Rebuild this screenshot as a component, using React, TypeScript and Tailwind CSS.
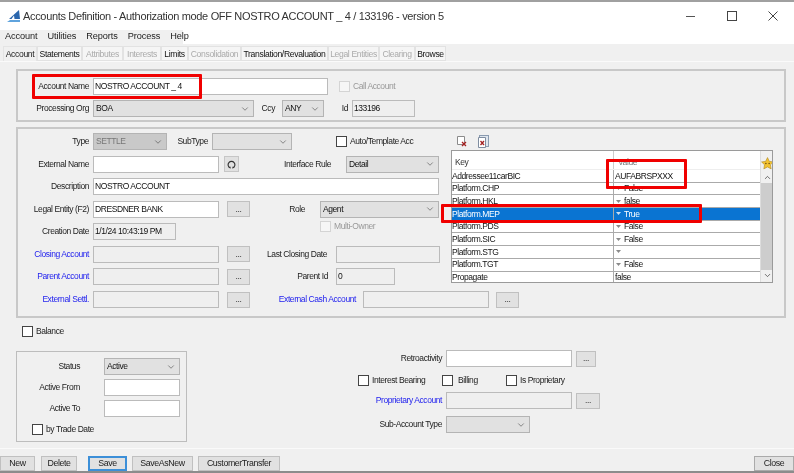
import type { ReactNode } from 'react';
import { ChevronDown, ChevronUp } from 'lucide-react';

const FONT = 'font-["Liberation_Sans",Arial,sans-serif]';

function Label({ width, blue, children }: { width: string; blue?: boolean; children: ReactNode }) {
  return (
    <span className={`${width} shrink-0 text-right whitespace-nowrap ${blue ? 'text-[#2222ee]' : 'text-[#222]'}`}>
      {children}
    </span>
  );
}

function Input({ width, value, off }: { width: string; value?: string; off?: boolean }) {
  return (
    <div
      className={`${width} h-[17px] shrink-0 flex items-center px-[1px] border border-[#bbb] truncate text-[#111] ${off ? 'bg-[#efefef]' : 'bg-white'}`}
    >
      {value}
    </div>
  );
}

function Select({ width, value, off }: { width: string; value?: string; off?: boolean }) {
  return (
    <div
      className={`${width} h-[17px] shrink-0 flex items-center justify-between pl-[2px] pr-[3px] border border-[#b4b4b4] ${off ? 'bg-[#c9c9c9] text-[#777]' : 'bg-[#e1e1e1] text-[#111]'}`}
    >
      <span>{value}</span>
      <ChevronDown size={10} strokeWidth={1.4} className="text-[#444]" />
    </div>
  );
}

function Dots({ width = 'w-[23px]' }: { width?: string }) {
  return (
    <div className={`${width} h-[16px] shrink-0 flex items-center justify-center bg-[#e1e1e1] border border-[#c0c0c0] text-[#333] leading-none`}>
      ...
    </div>
  );
}

function Check({ label, off, gap = 'gap-[3px]' }: { label: string; off?: boolean; gap?: string }) {
  return (
    <div className={`flex items-center ${gap} whitespace-nowrap`}>
      <div className={`w-[11px] h-[11px] shrink-0 border ${off ? 'border-[#d4d4d4] bg-[#f6f6f6]' : 'border-[#444] bg-white'}`} />
      <span className={off ? 'text-[#999]' : 'text-[#222]'}>{label}</span>
    </div>
  );
}

function RedBox({ cls }: { cls: string }) {
  return <div className={`absolute border-[3px] border-[#f00000] rounded-[1px] pointer-events-none ${cls}`} />;
}

function DocX({ stacked }: { stacked?: boolean }) {
  return (
    <svg width="13" height="13" viewBox="0 0 13 13" fill="none">
      {stacked && <rect x="2.5" y="0.5" width="9" height="11" fill="#dfe6ee" stroke="#8a9bb0" />}
      <path d={stacked ? 'M1.5 2.5h7v10h-7z' : 'M1.5 1.5h7v8h-7z'} fill="#fff" stroke={stacked ? '#7f8da0' : '#8b8b8b'} />
      <path d={stacked ? 'M3.5 6l3.5 4M7 6l-3.5 4' : 'M6 7l4 4M10 7l-4 4'} stroke="#a32020" strokeWidth="1.3" />
    </svg>
  );
}

const TABS: { name: string; width: string; off?: boolean }[] = [
  { name: 'Statements', width: 'w-[45px]' },
  { name: 'Attributes', width: 'w-[41px]', off: true },
  { name: 'Interests', width: 'w-[38px]', off: true },
  { name: 'Limits', width: 'w-[27px]' },
  { name: 'Consolidation', width: 'w-[53px]', off: true },
  { name: 'Translation/Revaluation', width: 'w-[87px]' },
  { name: 'Legal Entities', width: 'w-[51px]', off: true },
  { name: 'Clearing', width: 'w-[36px]', off: true },
  { name: 'Browse', width: 'w-[31px]' },
];

const ROWS: { key: string; value: string; combo?: boolean; selected?: boolean }[] = [
  { key: 'Addressee11carBIC', value: 'AUFABRSPXXX' },
  { key: 'Platform.CHP', value: 'False', combo: true },
  { key: 'Platform.HKL', value: 'false', combo: true },
  { key: 'Platform.MEP', value: 'True', combo: true, selected: true },
  { key: 'Platform.PDS', value: 'False', combo: true },
  { key: 'Platform.SIC', value: 'False', combo: true },
  { key: 'Platform.STG', value: '', combo: true },
  { key: 'Platform.TGT', value: 'False', combo: true },
  { key: 'Propagate', value: 'false' },
];

function PropertyTable() {
  return (
    <div className="w-[322px] h-[133px] flex border border-[#9a9a9a] bg-white text-[#111] overflow-hidden">
      <div className="w-[308px] shrink-0 flex flex-col">
        <div className="h-[19px] shrink-0 flex items-end text-[#333] border-b border-[#eee]">
          <span className="w-[162px] pl-[3px] pb-[3px] border-r border-[#ccc] h-full flex items-end">Key</span>
          <span className="pl-[4px] pb-[3px] text-[#777]">Value</span>
        </div>
        {ROWS.map((row) => (
          <div
            key={row.key}
            className={`h-[12.7px] shrink-0 flex items-center border-b border-[#aaa] ${row.selected ? 'bg-[#0a74d2] text-white' : ''}`}
          >
            <span className="w-[162px] shrink-0 border-r border-[#aaa] h-full flex items-center">{row.key}</span>
            <span className="flex items-center gap-[3px] pl-[1px]">
              {row.combo && (
                <svg width="5" height="3" viewBox="0 0 5 3" className="ml-[1px]">
                  <path d="M0 0h5L2.5 3z" fill={row.selected ? '#cfe2f5' : '#8a8a8a'} />
                </svg>
              )}
              {row.value}
            </span>
          </div>
        ))}
      </div>
      <div className="flex-1 flex flex-col items-center bg-[#f0f0f0] border-l border-[#ddd]">
        <svg width="13" height="13" viewBox="0 0 24 24" className="mt-[6px] mb-[3px] shrink-0">
          <path d="M12 1l3.4 7 7.6 1-5.5 5.4 1.3 7.6-6.8-3.6L5.2 22l1.3-7.6L1 9l7.6-1z" fill="#f2c230" stroke="#a98420" />
          <circle cx="9" cy="12" r="1.4" fill="#6b4a10" />
          <circle cx="15" cy="12" r="1.4" fill="#6b4a10" />
        </svg>
        <ChevronUp size={9} strokeWidth={1.8} className="text-[#333] shrink-0" />
        <div className="w-full flex-1 bg-[#cdcdcd] my-[1px]" />
        <ChevronDown size={9} strokeWidth={1.8} className="text-[#333] shrink-0 mb-[2px]" />
      </div>
    </div>
  );
}

export default function App() {
  return (
    <div className={`${FONT} relative w-[794px] h-[473px] overflow-hidden flex flex-col bg-white text-[8.5px] tracking-[-0.42px] leading-none blur-[0.2px]`}>
      {/* title bar */}
      <div className="h-[30px] shrink-0 border-t-2 border-[#a0a0a0] flex items-center pl-[6px] text-[#333]">
        <svg width="14" height="14" viewBox="0 0 14 14" className="shrink-0">
          <path d="M3 10L13 1l1 9H8.5L8 6.5 5.5 10z" fill="#2a66ad" />
          <path d="M1 13l3-2h10v2z" fill="#5fa3dd" />
        </svg>
        <span className="ml-[3px] text-[11px] tracking-[-0.33px] whitespace-nowrap">
          Accounts Definition - Authorization mode OFF NOSTRO ACCOUNT _ 4 / 133196 - version 5
        </span>
        <div className="ml-auto flex items-center">
          <svg width="10" height="10" viewBox="0 0 10 10" className="mr-[31px]"><path d="M0 5.5h9" stroke="#555" /></svg>
          <svg width="10" height="10" viewBox="0 0 10 10" className="mr-[31px]"><rect x="0.5" y="0.5" width="9" height="9" fill="none" stroke="#444" /></svg>
          <svg width="10" height="10" viewBox="0 0 10 10" className="mr-[16px]"><path d="M0.5 0.5l9 9M9.5 0.5l-9 9" stroke="#444" /></svg>
        </div>
      </div>

      {/* menu */}
      <div className="h-[14px] shrink-0 flex">
        <div className="w-[183px] flex items-center gap-[10px] pl-[5px] bg-[#f0f0f0] text-[9.2px] tracking-[-0.1px] text-[#222]">
          <span>Account</span>
          <span>Utilities</span>
          <span>Reports</span>
          <span>Process</span>
          <span>Help</span>
        </div>
      </div>

      {/* window body */}
      <div className="flex-1 flex flex-col min-h-0 bg-[#f0f0f0] pt-[2px]">
        <div className="h-[15px] shrink-0 flex items-stretch pl-[3px] text-[8.6px] tracking-[-0.35px]">
          <div className="w-[34px] -mb-[1px] bg-[#f0f0f0] border-x border-t border-[#e4e4e4] flex items-center justify-center text-[#222]">Account</div>
          {TABS.map((t) => (
            <div
              key={t.name}
              className={`${t.width} pt-[1px] flex items-center justify-center whitespace-nowrap border border-[#e2e2e2] bg-[#f5f5f5] ${t.off ? 'text-[#aaa]' : 'text-[#111]'}`}
            >
              {t.name}
            </div>
          ))}
        </div>

        <div className="flex-1 min-h-0 flex flex-col border-t border-b border-[#fafafa] px-[16px]">
          {/* account panel */}
          <div className="mt-[7px] h-[53px] w-[770px] shrink-0 border-2 border-[#c8c8c8] flex flex-col pt-[7px] gap-[5px]">
            <div className="flex items-center gap-[4px]">
              <Label width="w-[71px]">Account Name</Label>
              <Input width="w-[235px]" value="NOSTRO ACCOUNT _ 4" />
              <div className="ml-[7px]"><Check label="Call Account" off /></div>
            </div>
            <div className="flex items-center gap-[4px]">
              <Label width="w-[71px]">Processing Org</Label>
              <Select width="w-[161px]" value="BOA" />
              <Label width="w-[17px]">Ccy</Label>
              <div className="ml-[3px]"><Select width="w-[42px]" value="ANY" /></div>
              <Label width="w-[20px]">Id</Label>
              <Input width="w-[63px]" value="133196" off />
            </div>
          </div>

          {/* main panel */}
          <div className="mt-[5px] h-[191px] w-[770px] shrink-0 border-2 border-[#c8c8c8] flex flex-col">
            <div className="flex">
              <div className="w-[433px] shrink-0 flex flex-col pt-[4px] gap-[5.5px]">
                <div className="flex items-center gap-[4px]">
                  <Label width="w-[71px]">Type</Label>
                  <Select width="w-[74px]" value="SETTLE" off />
                  <Label width="w-[37px]">SubType</Label>
                  <Select width="w-[80px]" />
                  <div className="ml-[40px]"><Check label="Auto/Template Acc" /></div>
                </div>
                <div className="flex items-center gap-[4px]">
                  <Label width="w-[71px]">External Name</Label>
                  <Input width="w-[126px]" />
                  <div className="ml-[1px] w-[15px] h-[16px] shrink-0 flex items-center justify-center bg-[#e1e1e1] border border-[#c6c6c6]">
                    <svg width="9" height="9" viewBox="0 0 10 10" fill="none">
                      <path d="M3 8.5A3.8 3.8 0 1 1 7 8.5" stroke="#333" strokeWidth="1.3" />
                      <path d="M1 7.5h3v2.2zM9 7.5H6v2.2z" fill="#333" />
                    </svg>
                  </div>
                  <Label width="w-[88px]">Interface Rule</Label>
                  <div className="ml-[11px]"><Select width="w-[93px]" value="Detail" /></div>
                </div>
                <div className="flex items-center gap-[4px]">
                  <Label width="w-[71px]">Description</Label>
                  <Input width="w-[346px]" value="NOSTRO ACCOUNT" />
                </div>
                <div className="flex items-center gap-[4px]">
                  <Label width="w-[71px]">Legal Entity (F2)</Label>
                  <Input width="w-[126px]" value="DRESDNER BANK" />
                  <div className="ml-[4px]"><Dots /></div>
                  <Label width="w-[51px]">Role</Label>
                  <div className="ml-[11px]"><Select width="w-[119px]" value="Agent" /></div>
                </div>
                <div className="flex items-start gap-[4px] h-[17px]">
                  <div className="self-center flex items-center gap-[4px]">
                    <Label width="w-[71px]">Creation Date</Label>
                    <Input width="w-[83px]" value="1/1/24 10:43:19 PM" off />
                  </div>
                  <div className="ml-[140px] -mt-[2px]"><Check label="Multi-Owner" off /></div>
                </div>
                <div className="flex items-center gap-[4px]">
                  <Label width="w-[71px]" blue>Closing Account</Label>
                  <Input width="w-[126px]" off />
                  <div className="ml-[4px]"><Dots /></div>
                  <Label width="w-[73px]">Last Closing Date</Label>
                  <div className="ml-[5px]"><Input width="w-[104px]" off /></div>
                </div>
                <div className="flex items-center gap-[4px]">
                  <Label width="w-[71px]" blue>Parent Account</Label>
                  <Input width="w-[126px]" off />
                  <div className="ml-[4px]"><Dots /></div>
                  <Label width="w-[74px]">Parent Id</Label>
                  <div className="ml-[4px]"><Input width="w-[59px]" value="0" off /></div>
                </div>
              </div>
              <div className="pt-[3px] flex flex-col">
                <div className="h-[18px] flex items-center gap-[8px] pl-[5px]">
                  <DocX />
                  <DocX stacked />
                </div>
                <PropertyTable />
              </div>
            </div>
            <div className="mt-[6px] flex items-center gap-[4px]">
              <Label width="w-[71px]" blue>External Settl.</Label>
              <Input width="w-[126px]" off />
              <div className="ml-[4px]"><Dots /></div>
              <Label width="w-[102px]" blue>External Cash Account</Label>
              <div className="ml-[3px]"><Input width="w-[126px]" off /></div>
              <div className="ml-[3px]"><Dots /></div>
            </div>
          </div>

          <div className="mt-[8px] ml-[6px] h-[11px] shrink-0"><Check label="Balance" /></div>

          {/* lower section */}
          <div className="mt-[14px] flex items-start">
            <div className="w-[171px] h-[91px] shrink-0 border border-[#bdbdbd] flex flex-col pt-[6px] gap-[4px]">
              <div className="flex items-center gap-[24px]">
                <Label width="w-[63px]">Status</Label>
                <Select width="w-[76px]" value="Active" />
              </div>
              <div className="flex items-center gap-[24px]">
                <Label width="w-[63px]">Active From</Label>
                <Input width="w-[76px]" />
              </div>
              <div className="flex items-center gap-[24px]">
                <Label width="w-[63px]">Active To</Label>
                <Input width="w-[76px]" />
              </div>
              <div className="ml-[15px] mt-[3px]"><Check label="by Trade Date" /></div>
            </div>
            <div className="ml-[171px] -mt-[1px] flex flex-col">
              <div className="flex items-center gap-[4px]">
                <Label width="w-[84px]">Retroactivity</Label>
                <Input width="w-[126px]" />
                <Dots width="w-[20px]" />
              </div>
              <div className="mt-[8px] flex items-center">
                <div className="w-[84px]"><Check label="Interest Bearing" /></div>
                <div className="w-[64px]"><Check label="Billing" gap="gap-[5px]" /></div>
                <Check label="Is Proprietary" />
              </div>
              <div className="mt-[6px] flex items-center gap-[4px]">
                <Label width="w-[84px]" blue>Proprietary Account</Label>
                <Input width="w-[126px]" off />
                <Dots width="w-[24px]" />
              </div>
              <div className="mt-[7px] flex items-center gap-[4px]">
                <Label width="w-[84px]">Sub-Account Type</Label>
                <Select width="w-[84px]" />
              </div>
            </div>
          </div>
        </div>

        {/* action bar */}
        <div className="h-[22px] shrink-0 flex items-start pt-[7px] text-[#222] text-[8.8px] tracking-[-0.4px]">
          <div className="w-[35px] h-[15px] flex items-center justify-center bg-[#e1e1e1] border border-[#c0c0c0]">New</div>
          <div className="ml-[6px] w-[36px] h-[15px] flex items-center justify-center bg-[#e1e1e1] border border-[#c0c0c0]">Delete</div>
          <div className="ml-[11px] w-[39px] h-[15px] flex items-center justify-center bg-[#e1e1e1] border-2 border-[#3c8fd8]">Save</div>
          <div className="ml-[5px] w-[61px] h-[15px] flex items-center justify-center bg-[#e1e1e1] border border-[#c0c0c0]">SaveAsNew</div>
          <div className="ml-[5px] w-[82px] h-[15px] flex items-center justify-center bg-[#e1e1e1] border border-[#c0c0c0]">CustomerTransfer</div>
          <div className="ml-auto w-[40px] h-[15px] flex items-center justify-center bg-[#e1e1e1] border border-[#aaa]">Close</div>
        </div>
        <div className="h-[2px] shrink-0 bg-[#8c8c8c]" />
      </div>

      {/* red annotations drawn on top of the screenshot */}
      <RedBox cls="left-[32px] top-[74px] w-[170px] h-[25px]" />
      <RedBox cls="left-[606px] top-[159px] w-[81px] h-[30px]" />
      <RedBox cls="left-[441px] top-[204px] w-[261px] h-[19px]" />
    </div>
  );
}
